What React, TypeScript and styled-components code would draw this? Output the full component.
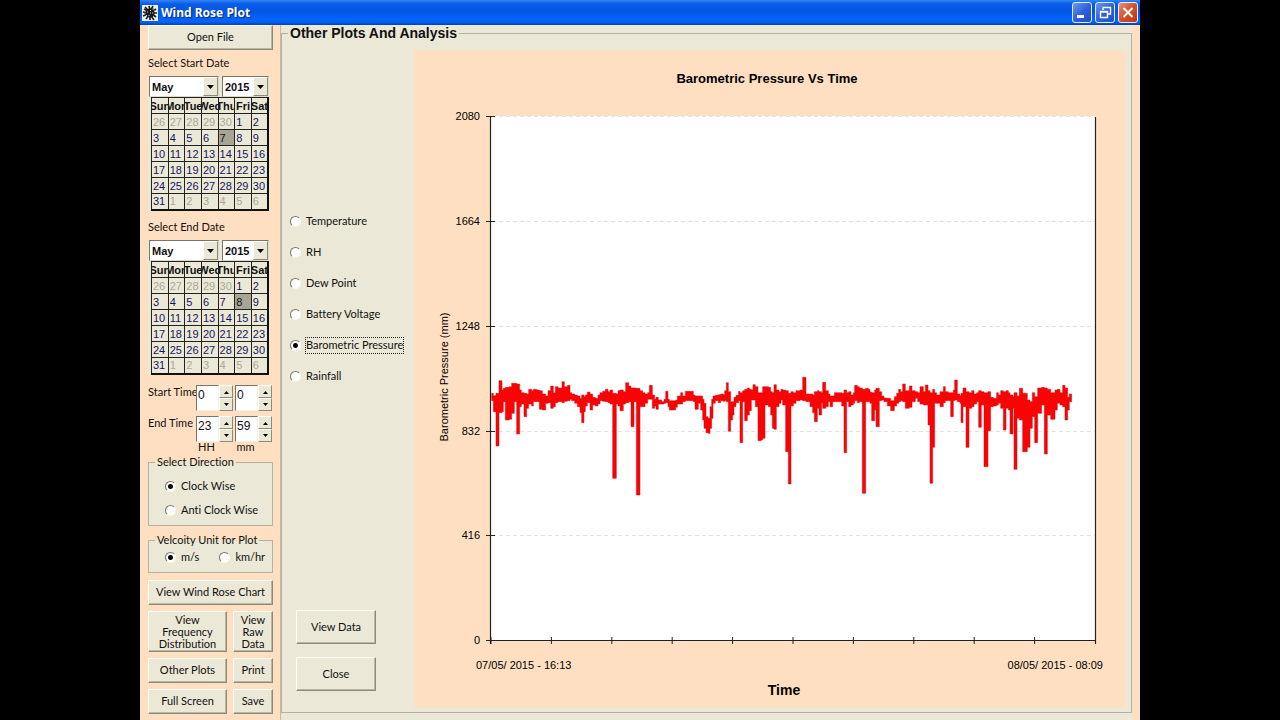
import React, { useState } from "react";
import styled, { createGlobalStyle } from "styled-components";

const peach = "#ffdfc1";
const face = "#ebe8d7";
const ui = `Lato, "Liberation Sans", sans-serif`;
const arial = `"Liberation Sans", Arial, sans-serif`;

const GlobalStyle = createGlobalStyle`
  * { box-sizing: border-box; }
  body { margin: 0; background: #000; color: #111; font: 11px/13px ${ui}; font-variant-ligatures: none; }
  button, input, select { font: inherit; font-variant-ligatures: none; color: inherit; margin: 0; }
`;

const AppWindow = styled.div`
  margin: 0 140px;
  min-height: 100vh;
  background: ${peach};
  display: flex;
  flex-direction: column;
`;

const TitleBar = styled.header`
  display: flex;
  align-items: center;
  gap: 3px;
  height: 25px;
  padding: 0 2px;
  background: linear-gradient(#2f86f5 0, #0a5ce8 4px, #0455e4 11px, #0364fb 19px, #0362f6 22px, #0140b4 25px);
`;

const AppTitle = styled.h1`
  flex: 1;
  margin: 0;
  color: #fff;
  font: bold 12px/16px "Noto Sans", sans-serif;
  text-shadow: 1px 1px 1px #0a2a80;
`;

const CaptionButton = styled.button<{ $close?: boolean }>`
  display: flex;
  width: 20px;
  height: 21px;
  padding: 0;
  border: 1px solid #e4ecff;
  border-radius: 3px;
  background: ${(p) =>
    p.$close
      ? "linear-gradient(135deg, #e98f76, #d0512b 50%, #b8390f)"
      : "linear-gradient(135deg, #6f98f2, #2f62da 50%, #1d4fc6)"};
`;

const Body = styled.div`
  flex: 1;
  display: grid;
  grid-template-columns: 125px minmax(0, 1fr);
  gap: 7px;
  padding: 0 0 0 8px;
`;

const Sidebar = styled.aside`
  display: flex;
  flex-direction: column;
  padding-bottom: 6px;
`;

const PushButton = styled.button`
  min-height: 25px;
  padding: 0 0 2px;
  background: ${face};
  border: 1px solid;
  border-color: #fffdf2 #8c8a78 #8c8a78 #fffdf2;
  box-shadow: inset -1px -1px #b9b6a4;
  border-radius: 0;
`;

const DateBlock = styled.div`
  display: flex;
  flex-direction: column;
  padding-top: 6px;
  height: 164px;
`;

const DateLabel = styled.span`
  height: 20px;
`;

const CalendarBox = styled.div`
  width: 122px;
  background: ${face};
`;

const Combos = styled.div`
  display: grid;
  grid-template-columns: 70px 47px;
  gap: 3px;
  height: 21px;
  padding-left: 1px;
`;

const Combo = styled.label`
  display: grid;
  grid-template-columns: 1fr 15px;
  border: 1px solid;
  border-color: #77756a #dedac8 #dedac8 #77756a;
  background: #fff;
`;

const ComboSelect = styled.select`
  grid-area: 1 / 1 / 2 / 3;
  appearance: none;
  min-width: 0;
  border: 0;
  padding: 0 0 0 2px;
  background: none;
  font: bold 11px/18px ${arial};
`;

const ComboArrow = styled.span`
  grid-area: 1 / 2 / 2 / 3;
  pointer-events: none;
  display: flex;
  align-items: center;
  justify-content: center;
  background: ${face};
  border: 1px solid;
  border-color: #fff #8c8a78 #8c8a78 #fff;
`;

const CalendarTable = styled.table`
  width: 118px;
  margin-left: 3px;
  border-collapse: collapse;
  table-layout: fixed;
  border: 1px solid #111;
  border-right-width: 2px;
  border-bottom-width: 2px;
`;

const WeekHead = styled.th`
  height: 16px;
  padding: 0;
  border: 1px solid #222;
  font: bold 11px/14px ${arial};
`;

const WeekName = styled.span`
  display: flex;
  justify-content: center;
  overflow: hidden;
`;

const DayCell = styled.td<{ $muted?: boolean; $picked?: boolean }>`
  height: 16px;
  padding: 0 0 0 1px;
  border: 1px solid #222;
  font: 11px/14px ${arial};
  color: ${(p) => (p.$muted ? "#a9a799" : p.$picked ? "#111" : "#15155f")};
  background: ${(p) => (p.$picked ? "#a8a594" : "none")};
`;

const Times = styled.div`
  display: grid;
  grid-template-columns: 46px 37px 37px;
  column-gap: 2px;
  row-gap: 5px;
  padding-top: 7px;
`;

const TimeLabel = styled.span`
  white-space: nowrap;
`;

const Spinner = styled.div`
  display: grid;
  grid-template-columns: 23px 14px;
  height: 26px;
`;

const SpinInput = styled.input`
  min-width: 0;
  padding: 0 0 6px 1px;
  border: 1px solid;
  border-color: #77756a #f4f1e2 #f4f1e2 #77756a;
  border-radius: 0;
  background: #fff;
  font: 12px/16px ${arial};
`;

const SpinButtons = styled.div`
  display: grid;
  grid-template-rows: 1fr 1fr;
`;

const SpinButton = styled.button`
  display: flex;
  align-items: center;
  justify-content: center;
  padding: 0;
  border: 1px solid;
  border-color: #fff #8c8a78 #8c8a78 #fff;
  background: ${face};
`;

const Units = styled.div`
  display: grid;
  grid-template-columns: 37px 37px;
  column-gap: 2px;
  padding: 0 0 2px 47px;
  line-height: 10px;
  & > span { width: 23px; text-align: center; }
`;

const GroupBox = styled.fieldset<{ $row?: boolean }>`
  display: flex;
  flex-direction: ${(p) => (p.$row ? "row" : "column")};
  gap: ${(p) => (p.$row ? "20px" : "11px")};
  min-width: 0;
  margin: ${(p) => (p.$row ? "8px" : "2px")} 0 0;
  padding: ${(p) => (p.$row ? "4px 0 8px 16px" : "11px 0 8px 16px")};
  border: 1px solid #b5b2a2;
  background: ${face};
`;

const GroupLegend = styled.legend`
  margin-left: -10px;
  padding: 0 2px 2px;
  line-height: 11px;
  white-space: nowrap;
`;

const RadioLabel = styled.label`
  display: flex;
  align-items: center;
  gap: 5px;
  white-space: nowrap;
`;

const RadioInput = styled.input.attrs({ type: "radio" })`
  appearance: none;
  width: 11px;
  height: 11px;
  border: 1px solid;
  border-color: #77756a #f8f6ec #f8f6ec #77756a;
  border-radius: 50%;
  background: #fff;
  &:checked { background: radial-gradient(circle, #000 2px, #fff 3px); }
`;

const Actions = styled.div`
  display: grid;
  grid-template-columns: 79px 40px;
  gap: 6px;
  margin-top: 7px;
`;

const WideAction = styled(PushButton)`
  grid-column: 1 / -1;
`;

const TallAction = styled(PushButton)`
  height: 41px;
  padding: 0;
  line-height: 12px;
`;

const Main = styled.main`
  display: flex;
  flex-direction: column;
  background: linear-gradient(90deg, ${face} calc(100% - 8px), ${peach} 0);
  border-left: 1px solid #c9b9a0;
  padding: 1px 8px 7px 0;
`;

const PlotFrame = styled.fieldset`
  flex: 1;
  display: grid;
  grid-template-columns: 132px minmax(0, 1fr);
  min-width: 0;
  margin: 0;
  padding: 9px 6px 3px 0;
  border: 1px solid #b5b2a2;
`;

const PlotLegend = styled.legend`
  margin-left: 6px;
  padding: 0 2px;
  font: bold 14px/15px ${arial};
`;

const PlotControls = styled.div`
  display: flex;
  flex-direction: column;
  justify-content: space-between;
  padding: 164px 0 18px 8px;
`;

const PlotChoices = styled.div`
  display: flex;
  flex-direction: column;
  gap: 16px;
`;

const ChoiceText = styled.span<{ $focused?: boolean }>`
  padding-bottom: 2px;
  line-height: ${(p) => (p.$focused === undefined ? "11px" : "13px")};
  outline: ${(p) => (p.$focused ? "1px dotted #222" : "none")};
`;

const PlotButtons = styled.div`
  display: grid;
  grid-template-columns: 80px;
  gap: 13px;
  padding-left: 6px;
`;

const PlotButton = styled(PushButton)`
  min-height: 34px;
`;

const ChartArea = styled.svg`
  display: block;
  width: 100%;
  height: auto;
  background: ${peach};
  font: 11px ${arial};
`;

const ChartStrong = styled.text<{ $size: number }>`
  font: bold ${(p) => p.$size}px ${arial};
  text-anchor: middle;
`;

const DownArrow = () => (
  <svg width="7" height="4" viewBox="0 0 7 4"><path d="M0 0h7L3.500 4z" fill="#000" /></svg>
);
const SmallArrow = ({ up }: { up?: boolean }) => (
  <svg width="7" height="4" viewBox="0 0 7 4"><path d={up ? "M1 4h5L3.500 1z" : "M1 0h5L3.500 3z"} fill="#000" /></svg>
);

const RoseIcon = () => (
  <svg width="16" height="16" viewBox="0 0 16 16" aria-hidden="true">
    <rect width="16" height="16" fill="#eef0f4" />
    <path d="M3 2l4 4M7 1l1 4M11 1l-2 4M14 4l-4 3M15 8l-4 0M14 12l-4-3M12 15l-3-4M8 15l0-4M4 14l3-4M1 11l5-2M1 7l5 1M2 4l4 2" stroke="#222" strokeWidth="1.700" fill="none" />
    <circle cx="8" cy="8" r="4.500" fill="#1a1a1a" />
    <path d="M5 7l1 0M8 5l1 1M10 8l1 0M7 10l0 1M8 8l1 0M12 6l1 0M4 10l1 1" stroke="#c8ccd8" />
    <path d="M2 8l2 0M9 12l1 1M11 4l1 0" stroke="#3d4560" />
  </svg>
);

const weekdays = ["Sun", "Mon", "Tue", "Wed", "Thu", "Fri", "Sat"];
const calendarDays = Array.from({ length: 42 }, (_, i) => {
  const n = i - 4;
  return n < 1 ? { day: n + 30, muted: true } : n > 31 ? { day: n - 31, muted: true } : { day: n, muted: false };
});

function DatePicker({ label, picked }: { label: string; picked: number }) {
  return (
    <DateBlock>
      <DateLabel>{label}</DateLabel>
      <CalendarBox>
        <Combos>
          <Combo>
            <ComboSelect aria-label={`${label} month`}><option>May</option></ComboSelect>
            <ComboArrow><DownArrow /></ComboArrow>
          </Combo>
          <Combo>
            <ComboSelect aria-label={`${label} year`}><option>2015</option></ComboSelect>
            <ComboArrow><DownArrow /></ComboArrow>
          </Combo>
        </Combos>
        <CalendarTable>
          <thead>
            <tr>{weekdays.map((d) => <WeekHead key={d}><WeekName>{d}</WeekName></WeekHead>)}</tr>
          </thead>
          <tbody>
            {[0, 1, 2, 3, 4, 5].map((w) => (
              <tr key={w}>
                {calendarDays.slice(w * 7, w * 7 + 7).map((c) => (
                  <DayCell key={c.day} $muted={c.muted} $picked={!c.muted && c.day === picked}>{c.day}</DayCell>
                ))}
              </tr>
            ))}
          </tbody>
        </CalendarTable>
      </CalendarBox>
    </DateBlock>
  );
}

function TimeSpinner({ label, value }: { label: string; value: string }) {
  return (
    <Spinner>
      <SpinInput aria-label={label} defaultValue={value} />
      <SpinButtons>
        <SpinButton aria-label={`${label} up`}><SmallArrow up /></SpinButton>
        <SpinButton aria-label={`${label} down`}><SmallArrow /></SpinButton>
      </SpinButtons>
    </Spinner>
  );
}

// Pressure trace: [x, highest, lowest] in thirds of a chart unit, each held until the next x.
const trace: number[][] = [
  [35,100,122],[40,107,155],[48,100,258],[57,62,158],[66,90,155],[70,85,125],[76,82,180],[88,80,178],[95,70,160],[103,70,125],
  [110,72,222],[119,90,140],[124,98,132],[132,100,170],[140,102,145],[146,88,132],[155,92,138],[160,88,125],[170,90,125],[178,92,148],
  [187,102,150],[197,108,130],[204,92,128],[212,78,145],[220,98,140],[226,80,128],[234,84,125],[246,65,128],[253,80,124],[262,76,122],
  [270,98,118],[275,102,122],[284,105,130],[292,108,140],[300,115,158],[305,105,188],[312,110,155],[316,105,138],[322,96,128],[330,102,150],
  [338,112,135],[346,115,138],[354,105,132],[360,98,122],[368,94,124],[376,88,125],[384,95,128],[390,90,132],[398,100,355],[409,102,132],
  [414,92,138],[420,90,152],[430,95,132],[437,68,128],[446,78,125],[453,84,200],[462,84,125],[469,85,405],[480,92,140],[488,98,140],
  [495,102,130],[503,98,118],[508,76,118],[517,105,145],[524,118,138],[528,112,148],[535,120,132],[545,125,132],[552,118,130],[557,94,128],
  [564,118,140],[568,122,150],[577,122,150],[587,120,142],[592,108,132],[602,98,132],[608,108,125],[616,94,122],[628,94,122],[640,105,125],
  [645,108,148],[655,108,130],[662,108,150],[668,118,180],[672,130,205],[678,170,218],[684,175,220],[690,140,205],[695,118,175],[699,108,130],
  [706,106,122],[715,104,128],[722,102,122],[730,104,124],[734,92,122],[739,68,125],[745,95,214],[752,125,180],[758,125,165],[762,112,140],
  [768,106,128],[776,94,122],[780,98,248],[788,92,125],[794,88,182],[802,84,165],[808,88,152],[814,90,120],[819,74,120],[826,80,140],
  [834,98,242],[843,98,240],[848,80,235],[855,80,135],[865,82,140],[872,95,165],[877,98,205],[882,74,208],[889,90,140],[897,95,130],
  [903,88,120],[908,90,135],[917,92,275],[925,100,372],[933,95,138],[940,98,130],[948,92,122],[960,90,120],[968,52,122],[978,102,125],
  [990,102,140],[998,105,158],[1003,95,185],[1012,92,145],[1017,95,165],[1025,98,130],[1028,67,145],[1037,92,140],[1045,102,125],[1050,108,140],
  [1058,108,125],[1063,98,125],[1075,98,125],[1085,100,138],[1092,90,278],[1100,98,125],[1106,95,140],[1113,105,135],[1120,98,130],[1124,76,122],
  [1132,80,128],[1138,84,125],[1147,88,400],[1157,85,125],[1165,88,125],[1170,96,130],[1175,98,182],[1184,90,150],[1188,85,200],[1198,95,122],
  [1205,108,120],[1212,114,125],[1222,115,138],[1232,122,152],[1243,110,138],[1250,100,130],[1256,88,125],[1262,95,122],[1268,72,125],[1276,92,145],
  [1288,78,142],[1296,92,125],[1306,95,115],[1313,98,125],[1320,80,132],[1330,95,135],[1336,75,135],[1344,92,195],[1350,98,370],[1358,88,262],
  [1364,98,130],[1370,105,130],[1380,95,140],[1390,80,128],[1396,95,122],[1405,98,122],[1412,98,170],[1420,90,122],[1424,60,120],[1432,102,125],
  [1440,108,130],[1443,100,188],[1449,84,140],[1458,95,262],[1467,98,145],[1475,92,140],[1482,102,132],[1490,98,125],[1496,92,202],[1504,95,135],
  [1512,98,320],[1524,95,212],[1532,112,140],[1540,115,138],[1550,98,135],[1555,105,130],[1562,92,145],[1570,95,210],[1578,92,145],[1585,98,150],
  [1590,105,222],[1599,110,145],[1602,98,328],[1611,108,175],[1618,85,180],[1628,100,275],[1642,120,262],[1650,125,205],[1657,98,170],[1664,110,248],
  [1673,84,160],[1685,82,135],[1693,84,282],[1702,88,165],[1712,98,178],[1725,90,150],[1732,88,130],[1740,98,135],[1748,76,140],[1755,84,180],
  [1763,112,150],[1768,102,125],[1775,102,125],
];

const px = (v: number) => 66 + v / 3;
const py = (v: number) => 310 + v / 3;
const tracePath = (() => {
  const upper: string[] = [];
  const lower: string[] = [];
  trace.slice(0, -1).forEach(([x, hi, lo], i) => {
    const end = trace[i + 1][0];
    upper.push(`${px(x)} ${py(hi)} ${px(end)} ${py(hi)}`);
    lower.unshift(`${px(end)} ${py(lo)} ${px(x)} ${py(lo)}`);
  });
  return `M${upper.join(" ")} ${lower.join(" ")}Z`;
})();

const yTicks: [number, number][] = [[2080, 66], [1664, 171], [1248, 276], [832, 381], [416, 485], [0, 590]];

function PressureChart() {
  return (
    <ChartArea viewBox="0 0 711 658" role="img" aria-label="Barometric Pressure Vs Time">
      <rect x="77" y="66" width="604" height="524" fill="#fff" />
      {yTicks.slice(0, 5).map(([v, y]) => (
        <path key={v} d={`M78 ${y + 0.5}H681`} stroke="#e2e2e2" strokeDasharray="4 3" />
      ))}
      <path d={tracePath} fill="#fb0204" stroke="#cf1216" strokeWidth="0.500" />
      <path d="M76.500 67V594M681.500 67V594" stroke="#222" strokeWidth="1.200" fill="none" />
      <path d="M72 590.500H682" stroke="#222" strokeWidth="1.200" />
      {yTicks.map(([v, y]) => (
        <React.Fragment key={v}>
          <path d={`M72 ${y + 0.5}H81`} stroke="#222" />
          <text x="66" y={y + 4} textAnchor="end">{v}</text>
        </React.Fragment>
      ))}
      {Array.from({ length: 10 }, (_, i) => (
        <path key={i} d={`M${77 + i * 60.4} 587V594`} stroke="#222" />
      ))}
      <ChartStrong $size={13} x="353" y="33">Barometric Pressure Vs Time</ChartStrong>
      <ChartStrong $size={14} x="370" y="645">Time</ChartStrong>
      <text x="62" y="619">07/05/ 2015 - 16:13</text>
      <text x="689" y="619" textAnchor="end">08/05/ 2015 - 08:09</text>
      <text transform="translate(34 327) rotate(-90)" textAnchor="middle">Barometric Pressure (mm)</text>
    </ChartArea>
  );
}

const plots = ["Temperature", "RH", "Dew Point", "Battery Voltage", "Barometric Pressure", "Rainfall"];

export default function App() {
  const [plot, setPlot] = useState("Barometric Pressure");
  return (
    <>
      <GlobalStyle />
      <AppWindow>
        <TitleBar>
          <RoseIcon />
          <AppTitle>Wind Rose Plot</AppTitle>
          <CaptionButton aria-label="Minimize">
            <svg width="18" height="19" viewBox="0 0 18 19"><path d="M4 13.500h7" stroke="#fff" strokeWidth="3" /></svg>
          </CaptionButton>
          <CaptionButton aria-label="Restore">
            <svg width="18" height="19" viewBox="0 0 18 19" fill="none" stroke="#fff"><path d="M7 7V4.500h7.500V11H12" strokeWidth="1.400" /><path d="M4.500 8.500h7v6h-7zM4 9h8" strokeWidth="1.400" /></svg>
          </CaptionButton>
          <CaptionButton $close aria-label="Close window">
            <svg width="18" height="19" viewBox="0 0 18 19"><path d="M4.500 5l9 9M13.500 5l-9 9" stroke="#fff" strokeWidth="2" /></svg>
          </CaptionButton>
        </TitleBar>
        <Body>
          <Sidebar>
            <PushButton>Open File</PushButton>
            <DatePicker label="Select Start Date" picked={7} />
            <DatePicker label="Select End Date" picked={8} />
            <Times>
              <TimeLabel>Start Time</TimeLabel>
              <TimeSpinner label="Start hour" value="0" />
              <TimeSpinner label="Start minute" value="0" />
              <TimeLabel>End Time</TimeLabel>
              <TimeSpinner label="End hour" value="23" />
              <TimeSpinner label="End minute" value="59" />
            </Times>
            <Units><span>HH</span><span>mm</span></Units>
            <GroupBox>
              <GroupLegend>Select Direction</GroupLegend>
              <RadioLabel><RadioInput name="direction" defaultChecked /><ChoiceText>Clock Wise</ChoiceText></RadioLabel>
              <RadioLabel><RadioInput name="direction" /><ChoiceText>Anti Clock Wise</ChoiceText></RadioLabel>
            </GroupBox>
            <GroupBox $row>
              <GroupLegend>Velcoity Unit for Plot</GroupLegend>
              <RadioLabel><RadioInput name="unit" defaultChecked /><ChoiceText>m/s</ChoiceText></RadioLabel>
              <RadioLabel><RadioInput name="unit" /><ChoiceText>km/hr</ChoiceText></RadioLabel>
            </GroupBox>
            <Actions>
              <WideAction>View Wind Rose Chart</WideAction>
              <TallAction>View Frequency Distribution</TallAction>
              <TallAction>View Raw Data</TallAction>
              <PushButton>Other Plots</PushButton>
              <PushButton>Print</PushButton>
              <PushButton>Full Screen</PushButton>
              <PushButton>Save</PushButton>
            </Actions>
          </Sidebar>
          <Main>
            <PlotFrame>
              <PlotLegend>Other Plots And Analysis</PlotLegend>
              <PlotControls>
                <PlotChoices>
                  {plots.map((p) => (
                    <RadioLabel key={p}>
                      <RadioInput name="plot" checked={plot === p} onChange={() => setPlot(p)} />
                      <ChoiceText $focused={plot === p}>{p}</ChoiceText>
                    </RadioLabel>
                  ))}
                </PlotChoices>
                <PlotButtons>
                  <PlotButton>View Data</PlotButton>
                  <PlotButton>Close</PlotButton>
                </PlotButtons>
              </PlotControls>
              <PressureChart />
            </PlotFrame>
          </Main>
        </Body>
      </AppWindow>
    </>
  );
}
